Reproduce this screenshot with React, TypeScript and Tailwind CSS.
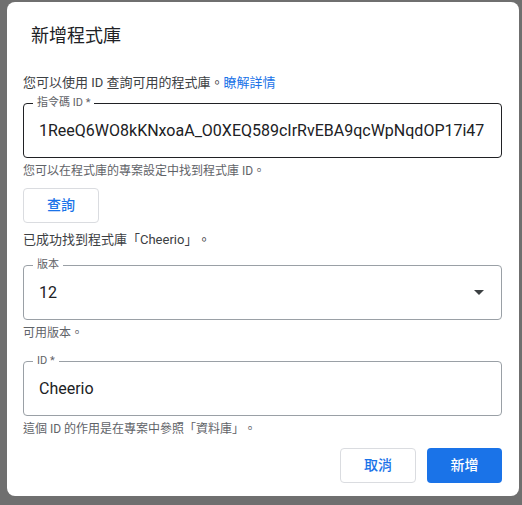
import React from "react";

const font = { fontFamily: 'Roboto, "Noto Sans CJK TC", "Noto Sans", sans-serif' };

const Field = ({
  label,
  value,
  focused,
  select,
}: {
  label: string;
  value: string;
  focused?: boolean;
  select?: boolean;
}) => (
  <div
    className={`relative h-[55px] rounded border flex items-center pl-[15px] pr-4 ${
      focused ? "border-[#202124]" : "border-[#9aa0a6]"
    }`}
  >
    <span className="absolute -top-[8px] left-[9px] bg-white px-[4px] text-[11px] leading-[14px] text-[#5f6368]">
      {label}
    </span>
    <span className="flex-1 text-[16px] text-[#202124] whitespace-nowrap overflow-hidden">
      {value}
    </span>
    {select && (
      <svg width="10" height="5" viewBox="0 0 10 5" className="mr-[1px]">
        <path d="M0 0h10L5 5z" fill="#3c4043" />
      </svg>
    )}
  </div>
);

export default function App() {
  return (
    <div
      className="w-[522px] h-[505px] bg-[#6f6f6f] pt-[2px] pl-[7px] [text-spacing-trim:space-all]"
      style={font}
    >
      <div className="w-[512px] h-[494px] bg-white rounded-lg flex flex-col">
        <h1 className="pt-[22px] pl-6 text-[18px] leading-6 text-[#202124]">新增程式庫</h1>
        <div className="px-4 pr-[17px] flex flex-col">
          <p className="mt-[25px] text-[13px] leading-5 text-[#3c4043]">
            您可以使用 ID 查詢可用的程式庫。<span className="text-[#1a73e8]">瞭解詳情</span>
          </p>
          <div className="mt-[10px]">
            <Field label="指令碼 ID *" value="1ReeQ6WO8kKNxoaA_O0XEQ589cIrRvEBA9qcWpNqdOP17i47" focused />
          </div>
          <p className="mt-[5px] text-[12px] leading-4 text-[#5f6368]">
            您可以在程式庫的專案設定中找到程式庫 ID。
          </p>
          <button className="mt-[9px] w-[76px] h-[35px] rounded border border-[#dadce0] text-[14px] text-[#1a73e8] font-medium">
            查詢
          </button>
          <p className="mt-[7px] text-[13px] leading-5 text-[#3c4043]">已成功找到程式庫「Cheerio」。</p>
          <div className="mt-[15px]">
            <Field label="版本" value="12" select />
          </div>
          <p className="mt-[5px] text-[12px] leading-4 text-[#5f6368]">可用版本。</p>
          <div className="mt-[20px]">
            <Field label="ID *" value="Cheerio" />
          </div>
          <p className="mt-[5px] text-[12px] leading-4 text-[#5f6368]">
            這個 ID 的作用是在專案中參照「資料庫」。
          </p>
          <div className="mt-[11px] flex justify-end gap-[11px]">
            <button className="w-[76px] h-[35px] rounded border border-[#dadce0] text-[14px] text-[#1a73e8] font-medium">
              取消
            </button>
            <button className="w-[75px] h-[35px] rounded bg-[#1a73e8] text-[14px] text-white font-medium">
              新增
            </button>
          </div>
        </div>
      </div>
    </div>
  );
}
